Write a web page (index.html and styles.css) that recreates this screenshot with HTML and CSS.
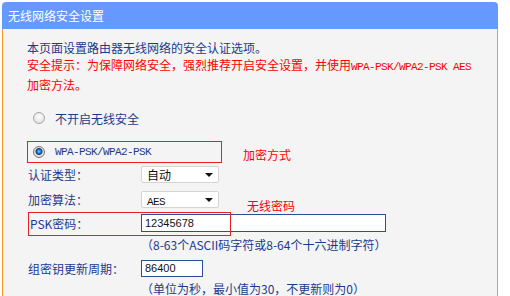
FILE: index.html
```html
<!DOCTYPE html>
<html lang="zh-CN">

<head>
    <meta charset="UTF-8">
    <title>无线网络安全设置</title>
    <link rel="stylesheet" href="styles.css">
</head>

<body>
    <div class="panel">
        <div class="title">无线网络安全设置</div>
        <div class="content">
            <p class="intro">本页面设置路由器无线网络的安全认证选项。</p>
            <p class="warn">安全提示：为保障网络安全，强烈推荐开启安全设置，并使用<span class="mono">WPA-PSK/WPA2-PSK AES</span><br>加密方法。</p>

            <div class="radio-row">
                <span class="radio"></span>
                <span>不开启无线安全</span>
            </div>

            <div class="mode-row">
                <div class="mode-box">
                    <span class="radio checked"></span>
                    <span class="mono">WPA-PSK/WPA2-PSK</span>
                </div>
                <span class="note mode-note">加密方式</span>
            </div>

            <div class="field first">
                <span class="label">认证类型：</span>
                <div class="select">自动</div>
            </div>
            <div class="field">
                <span class="label">加密算法：</span>
                <div class="select"><span class="mono">AES</span></div>
            </div>

            <div class="field psk">
                <span class="label">PSK密码：</span>
                <div class="input wide">12345678</div>
                <span class="note psk-note">无线密码</span>
            </div>
            <p class="hint">（8-63个ASCII码字符或8-64个十六进制字符）</p>

            <div class="field period">
                <span class="label">组密钥更新周期：</span>
                <div class="input short">86400</div>
            </div>
            <p class="hint last">（单位为秒，最小值为30，不更新则为0）</p>
        </div>
    </div>
</body>

</html>
```

FILE: styles.css
```css
* {
    margin: 0;
    padding: 0;
    box-sizing: border-box;
}

body {
    background-color: #ffffff;
    font-family: "Noto Sans CJK SC", "Noto Sans", sans-serif;
    font-size: 12px;
    color: #1c3a8c;
    height: 296px;
    overflow: hidden;
}

.panel {
    margin: 2px 0 0 2px;
    width: 496px;
}

.title {
    height: 27px;
    line-height: 27px;
    padding-left: 6px;
    background-color: #6699ff;
    color: #ffffff;
    font-size: 12px;
    border-radius: 4px 4px 0 0;
}

.content {
    height: 267px;
    padding: 10px 0 0 24px;
    background-color: #f4f4f4;
    border-left: 1px solid #ff9a1a;
    border-right: 1px solid #ff9a1a;
}

.mono {
    font-family: "Liberation Mono", monospace;
    font-size: 11px;
    letter-spacing: -0.6px;
}

.intro,
.warn {
    line-height: 17px;
}

.warn {
    color: #ff0000;
}

.radio {
    display: inline-block;
    width: 12px;
    height: 12px;
    border-radius: 50%;
    border: 1px solid #a8a8a8;
    background: radial-gradient(circle at 50% 40%, #ffffff, #d8d8d8);
    flex-shrink: 0;
}

.radio.checked {
    border-color: #7a7a7a;
    background: radial-gradient(circle at 50% 45%, #7fd0ff 0, #1a73c8 2px, #0c3a78 3px, #e6e6e6 4px, #cfcfcf 6px);
}

.radio-row {
    display: flex;
    align-items: center;
    gap: 10px;
    height: 20px;
    margin-top: 15px;
    padding-left: 6px;
}

.mode-row {
    display: flex;
    align-items: center;
    margin-top: 12px;
}

.mode-box {
    display: flex;
    align-items: center;
    gap: 10px;
    width: 195px;
    height: 22px;
    padding-left: 5px;
    border: 1px solid #e82020;
}

.note {
    color: #ff0000;
    line-height: 16px;
}

.mode-note {
    margin: 7px 0 0 21px;
}

.field {
    position: relative;
    display: flex;
    align-items: center;
    height: 17px;
    margin-top: 8px;
}

.field.first {
    margin-top: 3px;
}

.label {
    width: 114px;
    padding-left: 1px;
}

.select {
    position: relative;
    width: 78px;
    height: 17px;
    line-height: 15px;
    padding-left: 5px;
    background-color: #ffffff;
    border: 1px solid #d4d4d4;
    border-radius: 2px;
    color: #111111;
}

.select::after {
    content: "";
    position: absolute;
    right: 5px;
    top: 6px;
    border-left: 4px solid transparent;
    border-right: 4px solid transparent;
    border-top: 4px solid #111111;
}

.input {
    height: 18px;
    line-height: 16px;
    padding-left: 3px;
    background-color: #ffffff;
    border: 1px solid #2c4c9e;
    color: #111111;
    font-family: "Liberation Sans", sans-serif;
    font-size: 11px;
}

.input.wide {
    width: 245px;
}

.input.short {
    width: 62px;
    height: 17px;
    line-height: 15px;
}

.field.psk {
    height: 22px;
    margin-top: 4px;
}

.field.psk .label {
    padding-left: 3px;
}

.field.psk::before {
    content: "";
    position: absolute;
    left: 1px;
    top: 0;
    width: 201px;
    height: 22px;
    border: 1px solid #e82020;
    pointer-events: none;
}

.psk-note {
    position: absolute;
    left: 220px;
    top: -14px;
}

.hint {
    margin-top: 3px;
    padding-left: 114px;
    line-height: 16px;
}

.field.period {
    margin-top: 7px;
}

.hint.last {
    margin-top: 4px;
}
```
